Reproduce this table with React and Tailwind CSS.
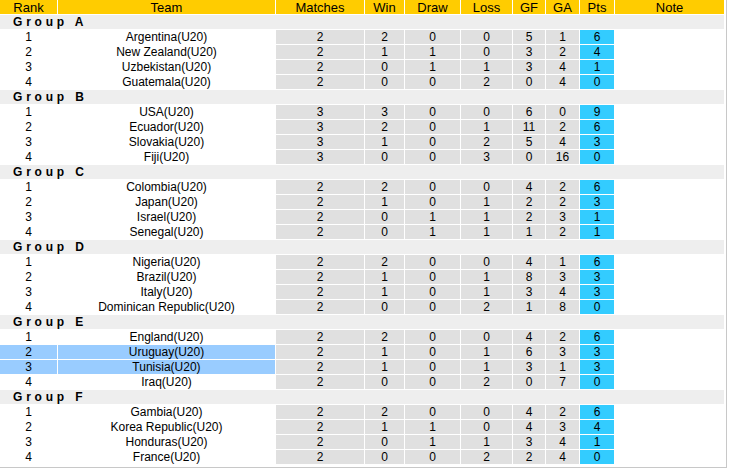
const groups = [
    {
        name: "A",
        rows: [
            ["Argentina", 2, 2, 0, 0, 5, 1, 6],
            ["New Zealand", 2, 1, 1, 0, 3, 2, 4],
            ["Uzbekistan", 2, 0, 1, 1, 3, 4, 1],
            ["Guatemala", 2, 0, 0, 2, 0, 4, 0],
        ],
    },
    {
        name: "B",
        rows: [
            ["USA", 3, 3, 0, 0, 6, 0, 9],
            ["Ecuador", 3, 2, 0, 1, 11, 2, 6],
            ["Slovakia", 3, 1, 0, 2, 5, 4, 3],
            ["Fiji", 3, 0, 0, 3, 0, 16, 0],
        ],
    },
    {
        name: "C",
        rows: [
            ["Colombia", 2, 2, 0, 0, 4, 2, 6],
            ["Japan", 2, 1, 0, 1, 2, 2, 3],
            ["Israel", 2, 0, 1, 1, 2, 3, 1],
            ["Senegal", 2, 0, 1, 1, 1, 2, 1],
        ],
    },
    {
        name: "D",
        rows: [
            ["Nigeria", 2, 2, 0, 0, 4, 1, 6],
            ["Brazil", 2, 1, 0, 1, 8, 3, 3],
            ["Italy", 2, 1, 0, 1, 3, 4, 3],
            ["Dominican Republic", 2, 0, 0, 2, 1, 8, 0],
        ],
    },
    {
        name: "E",
        rows: [
            ["England", 2, 2, 0, 0, 4, 2, 6],
            ["Uruguay", 2, 1, 0, 1, 6, 3, 3, true],
            ["Tunisia", 2, 1, 0, 1, 3, 1, 3, true],
            ["Iraq", 2, 0, 0, 2, 0, 7, 0],
        ],
    },
    {
        name: "F",
        rows: [
            ["Gambia", 2, 2, 0, 0, 4, 2, 6],
            ["Korea Republic", 2, 1, 1, 0, 4, 3, 4],
            ["Honduras", 2, 0, 1, 1, 3, 4, 1],
            ["France", 2, 0, 0, 2, 2, 4, 0],
        ],
    },
]

const headers = ["Rank", "Team", "Matches", "Win", "Draw", "Loss", "GF", "GA", "Pts", "Note"]

// column widths taken from the screenshot, 1px gaps between cells
const cols = "grid grid-cols-[57px_217px_88px_39px_55px_51px_32px_33px_34px_109px] gap-x-px"

const App = () => {
    return (
        <div
            className="w-[727px] h-[468px] bg-white border-r border-b border-[#c8c8c8] overflow-hidden text-[12px] leading-[14px] text-black"
            style={{fontFamily: '"Liberation Sans", Arial, sans-serif'}}
        >
            <div className="w-[724px] flex flex-col gap-y-px">
                <div className={cols}>
                    {headers.map((h) => (
                        <div key={h} className="h-[14px] bg-[#ffcc00] text-center text-[13px] leading-[15px]">{h}</div>
                    ))}
                </div>

                {groups.map((g) => (
                    <div key={g.name} className="flex flex-col gap-y-px">
                        <div className="h-[14px] bg-[#eeeeee] pl-[13px] font-bold tracking-[3.8px] leading-[15px]">
                            Group {g.name}
                        </div>
                        {g.rows.map((r, i) => {
                            const hl = r[8]
                            const side = hl ? "bg-[#99ccff]" : "bg-white"
                            return (
                                <div key={r[0]} className={cols}>
                                    <div className={`h-[14px] text-center leading-[15px] ${side}`}>{i + 1}</div>
                                    <div className={`h-[14px] text-center leading-[15px] ${side}`}>{r[0]}(U20)</div>
                                    {r.slice(1, 7).map((v, j) => (
                                        <div key={j} className="h-[14px] text-center leading-[15px] bg-[#e0e0e0]">{v}</div>
                                    ))}
                                    <div className="h-[14px] text-center leading-[15px] bg-[#33ccff]">{r[7]}</div>
                                    <div className="h-[14px] bg-white"></div>
                                </div>
                            )
                        })}
                    </div>
                ))}
            </div>
        </div>
    )
}

export default App
